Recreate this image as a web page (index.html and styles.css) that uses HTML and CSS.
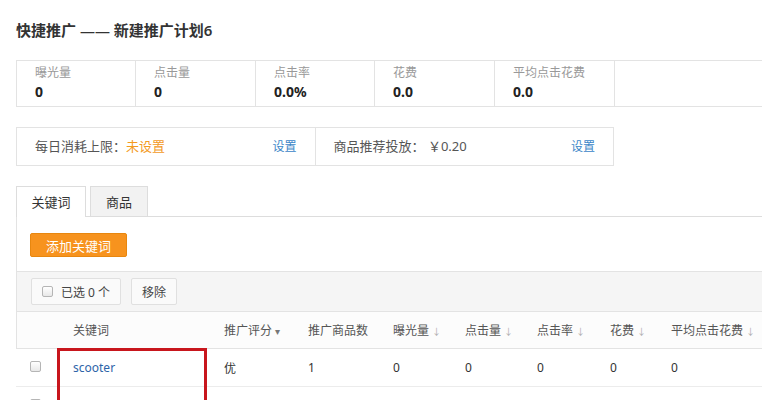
FILE: index.html
```html
<!DOCTYPE html>
<html lang="zh-CN">
<head>
    <meta charset="UTF-8">
    <meta name="viewport" content="width=device-width, initial-scale=1.0">
    <title>快捷推广</title>
    <link rel="stylesheet" href="styles.css">
</head>
<body>
    <h1 class="page-title">快捷推广 —— 新建推广计划6</h1>

    <!-- 数据概览 -->
    <div class="stats">
        <div class="stat"><div class="stat-label">曝光量</div><div class="stat-value">0</div></div>
        <div class="stat"><div class="stat-label">点击量</div><div class="stat-value">0</div></div>
        <div class="stat"><div class="stat-label">点击率</div><div class="stat-value">0.0%</div></div>
        <div class="stat"><div class="stat-label">花费</div><div class="stat-value">0.0</div></div>
        <div class="stat"><div class="stat-label">平均点击花费</div><div class="stat-value">0.0</div></div>
        <div class="stat stat-empty"></div>
    </div>

    <!-- 预算设置 -->
    <div class="settings">
        <div class="setting">
            <span>每日消耗上限：<em class="unset">未设置</em></span>
            <a href="#" class="link">设置</a>
        </div>
        <div class="setting">
            <span>商品推荐投放： ￥0.20</span>
            <a href="#" class="link">设置</a>
        </div>
    </div>

    <!-- 标签页 -->
    <div class="tabs">
        <a href="#" class="tab active">关键词</a>
        <a href="#" class="tab">商品</a>
    </div>

    <div class="tab-body">
        <div class="actions">
            <button class="btn-orange">添加关键词</button>
        </div>

        <div class="toolbar">
            <button class="btn-plain"><span class="checkbox"></span>已选 0 个</button>
            <button class="btn-plain">移除</button>
        </div>

        <div class="table">
            <div class="row head">
                <div class="cell"></div>
                <div class="cell">关键词</div>
                <div class="cell">推广评分<span class="caret">▾</span></div>
                <div class="cell">推广商品数</div>
                <div class="cell">曝光量<span class="sort">↓</span></div>
                <div class="cell">点击量<span class="sort">↓</span></div>
                <div class="cell">点击率<span class="sort">↓</span></div>
                <div class="cell">花费<span class="sort">↓</span></div>
                <div class="cell">平均点击花费<span class="sort">↓</span></div>
            </div>
            <div class="row">
                <div class="cell"><span class="checkbox"></span></div>
                <div class="cell"><a href="#" class="kw">scooter</a></div>
                <div class="cell">优</div>
                <div class="cell">1</div>
                <div class="cell">0</div>
                <div class="cell">0</div>
                <div class="cell">0</div>
                <div class="cell">0</div>
                <div class="cell">0</div>
            </div>
            <div class="row">
                <div class="cell"><span class="checkbox"></span></div>
                <div class="cell"><a href="#" class="kw">electric scooter</a></div>
                <div class="cell">优</div>
                <div class="cell">1</div>
                <div class="cell">0</div>
                <div class="cell">0</div>
                <div class="cell">0</div>
                <div class="cell">0</div>
                <div class="cell">0</div>
            </div>

            <!-- 标注框 -->
            <div class="mark"></div>
        </div>
    </div>
</body>
</html>
```

FILE: styles.css
```css
body {
    margin: 0;
    padding: 0 0 0 16px;
    font-family: "Noto Sans", "Noto Sans CJK SC", sans-serif;
    font-size: 12px;
    color: #333;
    background: #fff;
    overflow: hidden;
}

a {
    text-decoration: none;
}

button {
    font-family: inherit;
}

.page-title {
    margin: 20px 0 20px;
    font-size: 15px;
    line-height: 20px;
    font-weight: 600;
    color: #333;
}

/* 数据概览 */
.stats {
    display: flex;
    width: 800px;
    border: 1px solid #e3e3e3;
    border-right: none;
}

.stat {
    width: 119px;
    padding: 3px 0 4px 18px;
    border-right: 1px solid #e3e3e3;
    box-sizing: border-box;
}

.stat:nth-child(2),
.stat:nth-child(4),
.stat:nth-child(5) {
    width: 120px;
}

.stat-empty {
    flex: 1;
    border-right: none;
}

.stat-label {
    line-height: 18px;
    color: #999;
}

.stat-value {
    line-height: 20px;
    font-size: 14px;
    font-weight: 700;
    color: #222;
}

/* 预算设置 */
.settings {
    display: flex;
    width: 598px;
    margin-top: 20px;
    border: 1px solid #e3e3e3;
    box-sizing: border-box;
}

.setting {
    flex: 1;
    display: flex;
    justify-content: space-between;
    padding: 0 18px 0 18px;
    line-height: 37px;
    font-size: 13px;
    color: #555;
}

.setting + .setting {
    border-left: 1px solid #e3e3e3;
}

.unset {
    font-style: normal;
    color: #f39a1e;
}

.link {
    color: #3b86c8;
    font-size: 12px;
}

/* 标签页 */
.tabs {
    display: flex;
    gap: 4px;
    margin-top: 20px;
    border-bottom: 1px solid #ddd;
    width: 800px;
    height: 30px;
}

.tab {
    width: 68px;
    height: 29px;
    line-height: 30px;
    text-align: center;
    font-size: 13px;
    color: #333;
    border: 1px solid #ddd;
    border-bottom: none;
    background: #f2f2f2;
}

.tab.active {
    background: #fff;
    height: 30px;
}

.tab + .tab {
    width: 56px;
}

.tab-body {
    border-left: 1px solid #e3e3e3;
}

.actions {
    padding: 16px 0 14px 13px;
}

.btn-orange {
    display: block;
    width: 97px;
    height: 24px;
    padding: 0;
    border: 1px solid #e8870f;
    border-radius: 2px;
    background: #f7931e;
    color: #fff;
    font-size: 13px;
}

.toolbar {
    display: flex;
    gap: 10px;
    padding: 6px 14px 6px 14px;
    width: 800px;
    background: #f5f5f5;
    border-top: 1px solid #e3e3e3;
}

.btn-plain {
    display: flex;
    align-items: center;
    gap: 8px;
    height: 27px;
    padding: 0 10px;
    border: 1px solid #e0e0e0;
    border-radius: 2px;
    background: #fafafa;
    color: #444;
    font-size: 12px;
}

.checkbox {
    display: inline-block;
    width: 9px;
    height: 9px;
    border: 1px solid #b5b5b5;
    border-radius: 2px;
    background: linear-gradient(#fff, #e8e8e8);
}

/* 表格 */
.table {
    position: relative;
    width: 800px;
}

.row {
    display: grid;
    grid-template-columns: 40px 151px 84px 85px 72px 72px 73px 61px 1fr;
    height: 37px;
    align-items: center;
    border-bottom: 1px solid #ececec;
    margin-left: -1px;
    padding-left: 1px;
    background: #fff;
}

.row.head {
    height: 36px;
    border-top: 1px solid #e3e3e3;
    border-bottom: 1px solid #e3e3e3;
    border-left: 1px solid #e3e3e3;
    padding-left: 0;
    background: #fcfcfc;
    color: #555;
}

.cell {
    padding-left: 16px;
    white-space: nowrap;
}

.row .cell:first-child {
    padding-left: 13px;
}

.kw {
    color: #2d64a8;
    font-size: 12px;
}

.caret {
    margin-left: 3px;
    font-size: 10px;
    color: #777;
}

.sort {
    margin-left: 3px;
    font-size: 9px;
    color: #aaa;
}

.mark {
    position: absolute;
    left: 40px;
    top: 37px;
    width: 144px;
    height: 80px;
    border: 3px solid #c8161d;
}
```
